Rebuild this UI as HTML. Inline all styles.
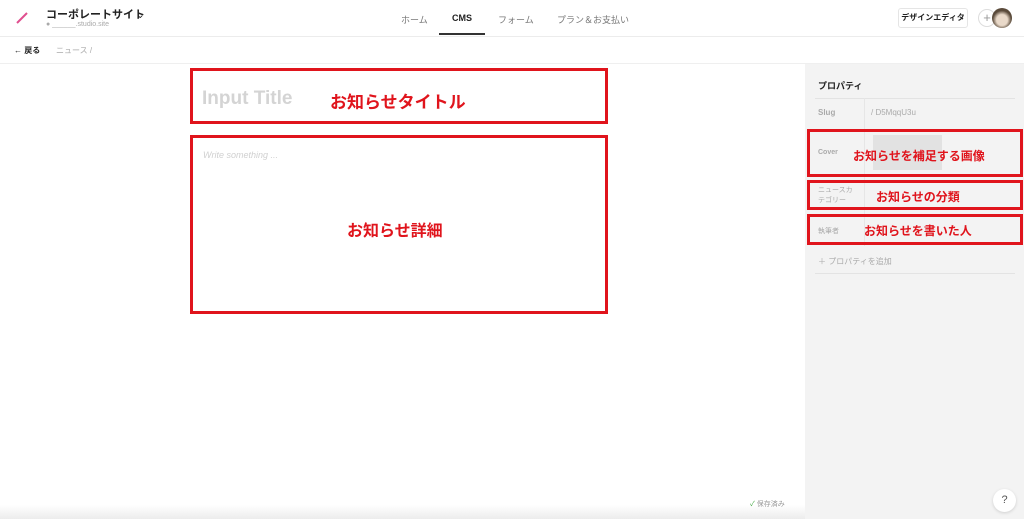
<!DOCTYPE html>
<html><head><meta charset="utf-8"><style>
*{margin:0;padding:0;box-sizing:border-box}
body{width:1024px;height:519px;overflow:hidden;background:#fff;font-family:"Liberation Sans","Noto Sans CJK JP",sans-serif;position:relative;color:#222}
.a{position:absolute}
.red{border:3px solid #e0141c}
.rt{color:#e0141c;font-weight:bold;position:absolute;white-space:nowrap}
.g{color:#aaa}
</style></head><body>
<div class="a" style="left:0;top:36px;width:1024px;height:1px;background:#ececec"></div>
<div class="a" style="left:0;top:63px;width:1024px;height:1px;background:#efefef"></div>
<svg class="a" style="left:14px;top:10px" width="16" height="16"><line x1="3" y1="13" x2="13" y2="3" stroke="#e0508f" stroke-width="2"/></svg>
<div class="a" style="left:46px;top:6px;font-size:11px;font-weight:bold">コーポレートサイト</div>
<div class="a" style="left:136px;top:10px;font-size:10px">⌄</div>
<div class="a g" style="left:46px;top:21px;font-size:7px">● ______.studio.site</div>
<div class="a" style="left:401px;top:13px;font-size:9px;color:#777">ホーム</div>
<div class="a" style="left:452px;top:13px;font-size:9px;font-weight:bold">CMS</div>
<div class="a" style="left:439px;top:33px;width:46px;height:2px;background:#333"></div>
<div class="a" style="left:498px;top:13px;font-size:9px;color:#777">フォーム</div>
<div class="a" style="left:557px;top:13px;font-size:9px;color:#777">プラン＆お支払い</div>
<div class="a" style="left:898px;top:8px;width:70px;height:20px;border:1px solid #e5e5e5;border-radius:3px;font-size:8px;font-weight:bold;text-align:center;line-height:18px">デザインエディタ</div>
<div class="a" style="left:978px;top:9px;width:18px;height:18px;border:1px solid #ddd;border-radius:50%;text-align:center;line-height:15px;font-size:13px;color:#999">+</div>
<div class="a" style="left:992px;top:8px;width:20px;height:20px;border-radius:50%;background:radial-gradient(circle at 50% 60%,#e9d9c9 35%,#5a4a3a 60%)"></div>
<div class="a" style="left:14px;top:45px;font-size:8px;font-weight:bold">← 戻る</div>
<div class="a g" style="left:56px;top:45px;font-size:8px">ニュース /</div>
<div class="a" style="left:805px;top:64px;width:219px;height:455px;background:#f3f3f3"></div>
<div class="a" style="left:0;top:505px;width:805px;height:14px;background:linear-gradient(#fff,#ececec)"></div>
<div class="a" style="left:818px;top:79px;font-size:9px;font-weight:bold">プロパティ</div>
<div class="a" style="left:815px;top:98px;width:200px;height:1px;background:#e3e3e3"></div>
<div class="a" style="left:864px;top:98px;width:1px;height:148px;background:#e6e6e6"></div>
<div class="a g" style="left:818px;top:108px;font-size:8px;font-weight:bold">Slug</div>
<div class="a g" style="left:871px;top:108px;font-size:8px">/ D5MqqU3u</div>
<div class="a" style="left:873px;top:135px;width:69px;height:35px;background:#e2e2e2"></div>
<div class="a g" style="left:818px;top:149px;font-size:7px;font-weight:bold">Cover</div>
<div class="a g" style="left:818px;top:186px;font-size:7px;line-height:10px">ニュースカ<br>テゴリー</div>
<div class="a g" style="left:818px;top:226px;font-size:7px">執筆者</div>
<div class="a g" style="left:818px;top:256px;font-size:8px">＋ プロパティを追加</div>
<div class="a" style="left:815px;top:273px;width:200px;height:1px;background:#e3e3e3"></div>
<div class="a red" style="left:190px;top:68px;width:418px;height:56px"></div>
<div class="a" style="left:202px;top:88px;font-size:19px;color:#d4d4d4;font-weight:bold">Input Title</div>
<div class="rt" style="left:330px;top:88px;font-size:17px">お知らせタイトル</div>
<div class="a red" style="left:190px;top:135px;width:418px;height:179px"></div>
<div class="a" style="left:203px;top:150px;font-size:9px;color:#d0d0d0;font-style:italic">Write something ...</div>
<div class="rt" style="left:347px;top:217px;font-size:16px">お知らせ詳細</div>
<div class="a red" style="left:807px;top:129px;width:216px;height:48px"></div>
<div class="rt" style="left:853px;top:147px;font-size:12px">お知らせを補足する画像</div>
<div class="a red" style="left:807px;top:180px;width:216px;height:30px"></div>
<div class="rt" style="left:876px;top:188px;font-size:12px">お知らせの分類</div>
<div class="a red" style="left:807px;top:214px;width:216px;height:31px"></div>
<div class="rt" style="left:864px;top:222px;font-size:12px">お知らせを書いた人</div>
<div class="a" style="left:750px;top:499px;font-size:7px;color:#999"><span style="color:#4a4">✓</span> 保存済み</div>
<div class="a" style="left:993px;top:489px;width:23px;height:23px;border-radius:50%;background:#fff;box-shadow:0 1px 3px rgba(0,0,0,.15);text-align:center;line-height:23px;font-size:11px;color:#555">?</div>
</body></html>
